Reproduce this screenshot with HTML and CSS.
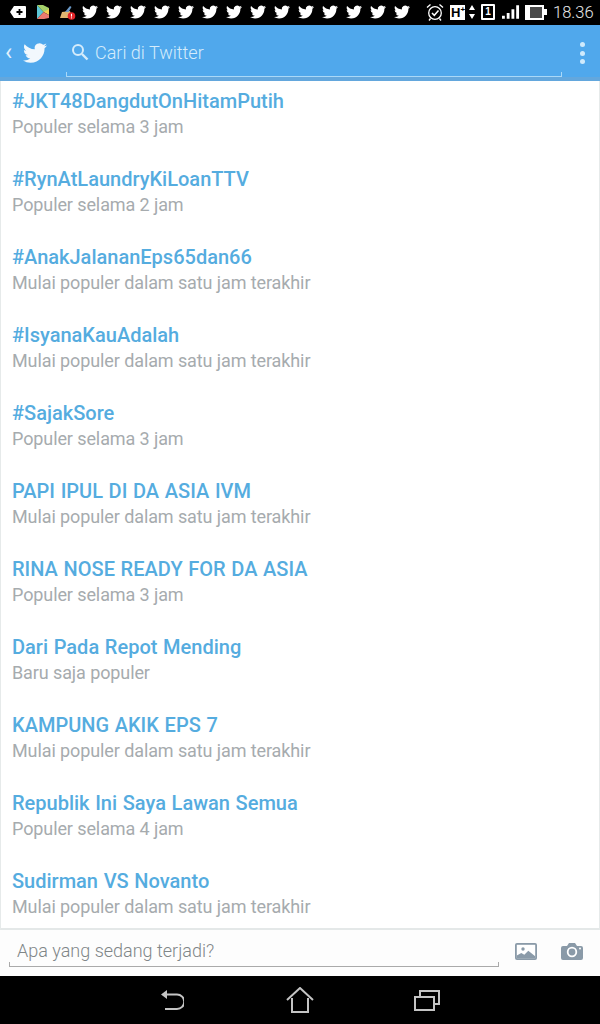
FILE: index.html
```html
<!DOCTYPE html>
<html lang="id">
<head>
<meta charset="utf-8">
<title>Cari di Twitter</title>
<link rel="stylesheet" href="styles.css">
</head>
<body>
<svg class="defs" width="0" height="0" aria-hidden="true">
  <symbol id="bird" viewBox="0 0 24 24"><path d="M23.953 4.57a10 10 0 01-2.825.775 4.958 4.958 0 002.163-2.723c-.951.555-2.005.959-3.127 1.184a4.92 4.92 0 00-8.384 4.482C7.69 8.095 4.067 6.13 1.64 3.162a4.822 4.822 0 00-.666 2.475c0 1.71.87 3.213 2.188 4.096a4.904 4.904 0 01-2.228-.616v.06a4.923 4.923 0 003.946 4.827 4.996 4.996 0 01-2.212.085 4.936 4.936 0 004.604 3.417 9.867 9.867 0 01-6.102 2.105c-.39 0-.779-.023-1.17-.067a13.995 13.995 0 007.557 2.209c9.053 0 13.998-7.496 13.998-13.985 0-.21 0-.42-.015-.63A9.935 9.935 0 0024 4.59z"/></symbol>
</svg>
<div class="status">
  <svg class="ic-plus" viewBox="0 0 16 12"><path d="M4 0h11a1 1 0 011 1v10a1 1 0 01-1 1H4L0 6z" fill="#fff"/><path d="M6.500 6h6M9.500 3v6" stroke="#000" stroke-width="1.800"/></svg>
  <svg class="ic-play" viewBox="0 0 14 16"><path d="M1 1l6.500 7L1 15z" fill="#5cc6d6"/><path d="M1 1h6l6 3v2l-3.500 2-2 0z" fill="#a5d16a"/><path d="M7.500 8L13 5v6z" fill="#f5cb50"/><path d="M1 15l6.500-7 2.500 1.500 3 1.500v3l-5 1z" fill="#ea7a70"/></svg>
  <svg class="ic-clean" viewBox="0 0 17 15"><path d="M1 13l2-6 8-1 2 7z" fill="#dfb570"/><path d="M6 7l5-6 1.500 1-3 5z" fill="#6c9ac8"/><circle cx="12.500" cy="11" r="3.800" fill="#e4262a"/><path d="M12.500 8.800v2.800M12.500 12.400v1" stroke="#fff"/></svg>
  <div class="birds">
    <svg class="sb"><use href="#bird"/></svg><svg class="sb"><use href="#bird"/></svg><svg class="sb"><use href="#bird"/></svg><svg class="sb"><use href="#bird"/></svg><svg class="sb"><use href="#bird"/></svg><svg class="sb"><use href="#bird"/></svg><svg class="sb"><use href="#bird"/></svg><svg class="sb"><use href="#bird"/></svg><svg class="sb"><use href="#bird"/></svg><svg class="sb"><use href="#bird"/></svg><svg class="sb"><use href="#bird"/></svg><svg class="sb"><use href="#bird"/></svg><svg class="sb"><use href="#bird"/></svg><svg class="sb"><use href="#bird"/></svg>
  </div>
  <svg class="ic-alarm" viewBox="0 0 18 18"><circle cx="9" cy="10" r="6.300" fill="none" stroke="#fff" stroke-width="1.300"/><path d="M6 10l2.300 2.300L12.500 7.500" fill="none" stroke="#fff" stroke-width="1.500"/><path d="M1 4.500L4.500 1.500M17 4.500L13.500 1.500M4.500 15.500L3 17.500M13.500 15.500L15 17.500" stroke="#fff" stroke-width="1.300"/></svg>
  <div class="hplus">H<sup class="hsup">+</sup></div>
  <svg class="ic-arrows" viewBox="0 0 6 14"><path d="M3 0l3 5H0zM3 14l3-5H0z" fill="#fff"/></svg>
  <div class="sim">1</div>
  <svg class="ic-signal" viewBox="0 0 19 14"><path d="M0 11h3v3H0zM5 8h3v6H5zM10 4h3v10h-3zM15 0h3v14h-3z" fill="#fff"/></svg>
  <div class="battery"><div class="battery-level"></div></div>
  <div class="clock">18.36</div>
</div>

<header class="appbar">
  <span class="back">‹</span>
  <svg class="logo"><use href="#bird"/></svg>
  <div class="search">
    <svg class="search-ic" viewBox="0 0 18 18"><circle cx="7" cy="7" r="5" fill="none" stroke="#d5ecfb" stroke-width="2"/><path d="M11 11l5.500 5.500" stroke="#d5ecfb" stroke-width="2.400"/></svg>
    <span class="search-text">Cari di Twitter</span>
  </div>
  <div class="menu"><i class="dot"></i><i class="dot"></i><i class="dot"></i></div>
</header>

<main class="list">
  <div class="trend"><div class="t">#JKT48DangdutOnHitamPutih</div><div class="s">Populer selama 3 jam</div></div>
  <div class="trend"><div class="t">#RynAtLaundryKiLoanTTV</div><div class="s">Populer selama 2 jam</div></div>
  <div class="trend"><div class="t">#AnakJalananEps65dan66</div><div class="s">Mulai populer dalam satu jam terakhir</div></div>
  <div class="trend"><div class="t">#IsyanaKauAdalah</div><div class="s">Mulai populer dalam satu jam terakhir</div></div>
  <div class="trend"><div class="t">#SajakSore</div><div class="s">Populer selama 3 jam</div></div>
  <div class="trend"><div class="t">PAPI IPUL DI DA ASIA IVM</div><div class="s">Mulai populer dalam satu jam terakhir</div></div>
  <div class="trend"><div class="t">RINA NOSE READY FOR DA ASIA</div><div class="s">Populer selama 3 jam</div></div>
  <div class="trend"><div class="t">Dari Pada Repot Mending</div><div class="s">Baru saja populer</div></div>
  <div class="trend"><div class="t">KAMPUNG AKIK EPS 7</div><div class="s">Mulai populer dalam satu jam terakhir</div></div>
  <div class="trend"><div class="t">Republik Ini Saya Lawan Semua</div><div class="s">Populer selama 4 jam</div></div>
  <div class="trend"><div class="t">Sudirman VS Novanto</div><div class="s">Mulai populer dalam satu jam terakhir</div></div>
</main>

<div class="compose">
  <div class="field">Apa yang sedang terjadi?</div>
  <svg class="ic-photo" viewBox="0 0 22 17"><rect width="22" height="17" rx="2" fill="#8a9aa8"/><rect x="1.800" y="1.800" width="18.400" height="13.400" fill="#fff"/><circle cx="8" cy="6" r="1.700" fill="#8a9aa8"/><path d="M1.800 15.200v-2.700l4.500-2.500 3 1.800 4-4 6.900 5.500v1.900z" fill="#8a9aa8"/></svg>
  <svg class="ic-cam" viewBox="0 0 22 17"><path d="M2 3h4l2-3h6l2 3h4a2 2 0 012 2v10a2 2 0 01-2 2H2a2 2 0 01-2-2V5a2 2 0 012-2z" fill="#8a9aa8"/><circle cx="11" cy="9" r="4.300" fill="none" stroke="#fff" stroke-width="1.800"/><circle cx="19" cy="5.500" r="1" fill="#fff"/></svg>
</div>

<nav class="navbar">
  <svg class="nav-back" viewBox="0 0 24 22"><path d="M1 5.500l6-4.500v9z" fill="#c4c4c4"/><path d="M6 5.500h11a7 7 0 010 14.500H5" fill="none" stroke="#c4c4c4" stroke-width="2"/></svg>
  <svg class="nav-home" viewBox="0 0 28 26"><path d="M1 13L14 1l13 12M6 11v14h16V11" fill="none" stroke="#c4c4c4" stroke-width="2"/></svg>
  <svg class="nav-recent" viewBox="0 0 26 22"><path d="M1 8h19v13H1z" fill="none" stroke="#c4c4c4" stroke-width="2"/><path d="M6 7V2h19v13h-4" fill="none" stroke="#c4c4c4" stroke-width="2"/></svg>
</nav>
</body>
</html>
```
FILE: styles.css
```css
* { box-sizing: border-box; }
html, body { margin: 0; padding: 0; }
body {
  width: 600px;
  height: 1024px;
  overflow: hidden;
  display: flex;
  flex-direction: column;
  background: #fff;
  font-family: Roboto, "Liberation Sans", sans-serif;
}
.defs { position: absolute; }

.status {
  height: 25px;
  flex: none;
  background: #000;
  display: flex;
  align-items: center;
  padding: 0 0 1px 10px;
  color: #fff;
}
.status svg { flex: none; }
.ic-plus { width: 16px; height: 12px; }
.ic-play { width: 14px; height: 16px; margin-left: 10px; }
.ic-clean { width: 17px; height: 15px; margin-left: 9px; }
.birds { display: flex; gap: 8px; margin-left: 6px; }
.sb { width: 16px; height: 16px; fill: #fff; }
.ic-alarm { width: 18px; height: 18px; margin-left: 16px; }
.hplus {
  width: 15px;
  height: 15px;
  margin-left: 6px;
  background: #fff;
  color: #000;
  font: 700 13px/15px "Liberation Sans", sans-serif;
  padding-left: 1px;
  display: flex;
}
.hsup { font-size: 8px; line-height: 9px; }
.ic-arrows { width: 6px; height: 14px; margin-left: 4px; }
.sim {
  width: 14px;
  height: 16px;
  margin-left: 6px;
  background: #000;
  border: 2px solid #fff;
  border-radius: 1px;
  font: 700 10px/12px "Liberation Sans", sans-serif;
  text-align: center;
}
.ic-signal { width: 18px; height: 14px; margin-left: 7px; }
.battery {
  width: 19px;
  height: 15px;
  margin-left: 5px;
  background: #fff;
  padding: 2px 0 2px 5px;
  position: relative;
}
.battery::after {
  content: "";
  position: absolute;
  right: -3px;
  top: 4px;
  width: 3px;
  height: 6px;
  background: #fff;
}
.battery-level { width: 12px; height: 11px; background: #4a4a4a; }
.clock { margin-left: 9px; font-size: 16.500px; font-weight: 300; color: #e8e8e8; }

.appbar {
  height: 56px;
  flex: none;
  background: #50a8ec;
  border-bottom: 4px solid #63a7dd;
  display: flex;
  align-items: center;
  padding: 4px 0 0 5px;
  color: #fff;
}
.back { width: 11px; font-size: 24px; line-height: 24px; margin-top: -3px; color: #e2f1fc; }
.logo { width: 24px; height: 24px; fill: #f2f8fd; margin-left: 7px; }
.search {
  width: 496px;
  height: 48px;
  margin-left: 19px;
  border-bottom: 1px solid #a9d8f8;
  display: flex;
  align-items: center;
  padding: 0 0 0 5px;
  position: relative;
}
.search::before, .search::after {
  content: "";
  position: absolute;
  bottom: 0;
  width: 1px;
  height: 4px;
  background: #a9d8f8;
}
.search::before { left: 0; }
.search::after { right: 0; }
.search-ic { width: 18px; height: 18px; margin-top: -1px; }
.search-text { margin-left: 6px; font-size: 18px; font-weight: 300; color: #d5ecfb; }
.menu { display: flex; flex-direction: column; gap: 3.500px; margin-left: 18px; }
.dot { display: block; width: 5px; height: 5px; border-radius: 50%; background: #cfeafc; }

.list {
  height: 849px;
  flex: none;
  overflow: hidden;
  padding: 4px 11px 0;
  border-left: 1px solid #e6eaea;
  border-right: 1px solid #e6eaea;
  border-bottom: 2px solid #e4e8e8;
}
.trend { height: 78px; }
.t { font-size: 20px; line-height: 32px; font-weight: 500; color: #55acdf; word-spacing: .7px; }
.s { font-size: 18px; line-height: 20px; color: #a6abae; font-weight: 400; letter-spacing: -.1px; }

.compose {
  height: 46px;
  flex: none;
  display: flex;
  align-items: center;
  padding-left: 9px;
  background: #fdfdfd;
}
.field {
  width: 490px;
  height: 30px;
  align-self: flex-start;
  margin-top: 7px;
  padding-left: 8px;
  border-bottom: 1px solid #aaa;
  font-size: 18px;
  font-weight: 300;
  line-height: 28px;
  color: #808688;
  position: relative;
}
.field::before, .field::after {
  content: "";
  position: absolute;
  bottom: 0;
  width: 1px;
  height: 4px;
  background: #aaa;
}
.field::before { left: 0; }
.field::after { right: 0; }
.ic-photo { width: 22px; height: 17px; margin-left: 16px; margin-top: -3px; }
.ic-cam { width: 22px; height: 17px; margin-left: 24px; margin-top: -3px; }

.navbar {
  height: 48px;
  flex: none;
  background: #000;
  display: flex;
  align-items: center;
  padding-left: 160px;
}
.nav-back { width: 24px; height: 22px; }
.nav-home { width: 28px; height: 26px; margin-left: 102px; }
.nav-recent { width: 26px; height: 22px; margin-left: 100px; }
```
